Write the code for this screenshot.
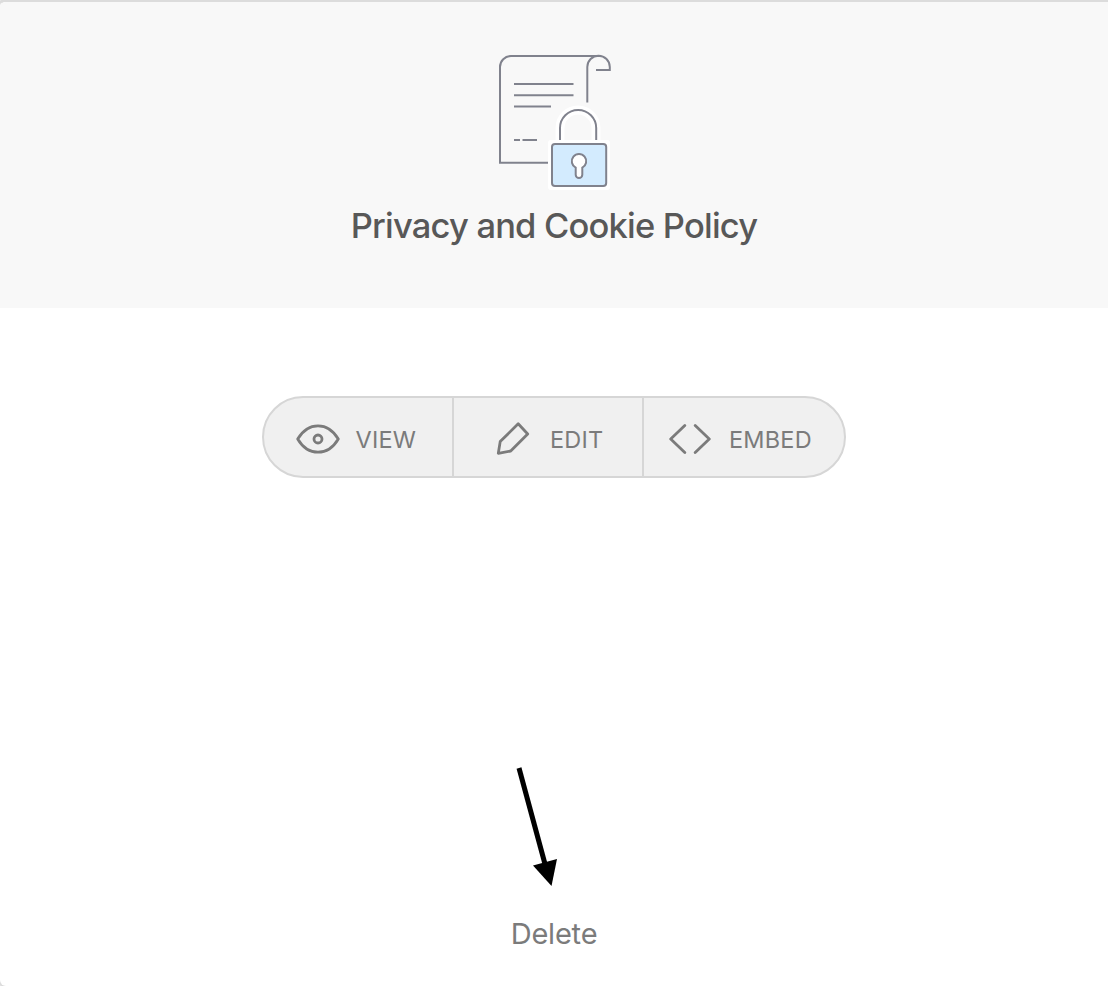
<template>
    <div class="policy-card">
        <header class="policy-header">
            <!-- Document with padlock -->
            <svg class="policy-icon" viewBox="16 12 122 140" fill="none" stroke="#80828d" stroke-width="2">
                <path d="M107.3 62.5V27a11 11 0 0 1 22.5 0v3H116M119 16H31a11 11 0 0 0-11 11v95.7h49" />
                <path d="M34 44h59.5M34 55.3h59.5M34 66.5h37M34 100h6M42.5 100H57" />
                <path class="halo" d="M80 104V88a18 18 0 0 1 36 0v16" />
                <rect class="halo-box" x="68" y="100" width="62" height="50" rx="3" />
                <path d="M80 100V88a18 18 0 0 1 36.2 0v12" />
                <rect x="72" y="104" width="54.2" height="42" rx="3" fill="#d3ebfe" />
                <path d="M95.7 127.6a7.2 7.2 0 1 1 6.6 0v7.2a3.3 3.3 0 0 1-6.6 0z" fill="#fff" />
            </svg>
            <h1 class="policy-title">Privacy and Cookie Policy</h1>
        </header>

        <main class="policy-body">
            <div class="action-group">
                <button class="action action-view" type="button">
                    <svg class="eye-icon" viewBox="0 0 44 30">
                        <path d="M1.7 15Q9.5 1.8 22 1.8T42.3 15Q34.5 28.2 22 28.2T1.7 15z" />
                        <circle cx="22" cy="15" r="4" />
                    </svg>
                    <span>VIEW</span>
                </button>
                <button class="action action-edit" type="button">
                    <svg class="pencil-icon" viewBox="0 0 34 34">
                        <path d="M22.2 1.8 31.7 12 14.7 29 2.3 31.3 4.2 19.6z" />
                    </svg>
                    <span>EDIT</span>
                </button>
                <button class="action action-embed" type="button">
                    <svg class="code-icon" viewBox="0 0 42 30">
                        <path d="M15.8 1.5 1.7 15l14.1 13.5M26.2 1.5 40.3 15 26.2 28.5" />
                    </svg>
                    <span>EMBED</span>
                </button>
            </div>

            <div class="delete-area">
                <svg class="arrow" viewBox="0 0 44 122">
                    <path d="M13 2 39 98" stroke="#000" stroke-width="5" />
                    <path d="M27 99.5 51 93 45.5 120z" />
                </svg>
                <a class="delete-link">Delete</a>
            </div>
        </main>
    </div>
</template>

<style>
body {
    background: #fff;
}
</style>

<style scoped>
.policy-card {
    display: flex;
    flex-direction: column;
    box-sizing: border-box;
    height: 986px;
    overflow: hidden;
    border-top: 2px solid #dcdcdc;
    border-radius: 6px 0 0 6px;
    background: #fff;
    box-shadow: 0 0 0 2px #dcdcdc;
    font-family: Inter, "Liberation Sans", sans-serif;
}

.policy-header {
    display: flex;
    flex-direction: column;
    align-items: center;
    box-sizing: border-box;
    height: 306px;
    padding-top: 50px;
    background: #f8f8f8;
}

.policy-icon {
    width: 122px;
    height: 140px;
    margin-left: 6px;
}

.halo {
    stroke: #fff;
    stroke-width: 9;
}

.halo-box {
    fill: #fff;
    stroke: none;
}

.policy-title {
    margin: 12px 0 0;
    color: #585858;
    font-size: 34.5px;
    font-weight: 500;
    line-height: 44px;
    letter-spacing: -0.8px;
    white-space: nowrap;
}

.policy-body {
    display: flex;
    flex: 1;
    flex-direction: column;
    align-items: center;
    justify-content: space-between;
    padding: 88px 0 33px;
}

.action-group {
    display: flex;
    box-sizing: border-box;
    width: 584px;
    height: 82px;
    overflow: hidden;
    border: 2px solid #d6d6d6;
    border-radius: 41px;
    background: #f0f0f0;
}

.action {
    display: flex;
    align-items: center;
    box-sizing: border-box;
    padding: 3px 0 0;
    border: 0;
    background: none;
    color: #7b7b7b;
    font-family: inherit;
    font-size: 23.5px;
    line-height: 30px;
    letter-spacing: 0.2px;
    cursor: pointer;
}

.action span {
    padding-top: 3px;
}

.action svg {
    flex: none;
    fill: none;
    stroke: #7b7b7b;
    stroke-width: 2.8;
    stroke-linecap: round;
    stroke-linejoin: round;
}

.action-view {
    width: 190px;
    padding-left: 32px;
    gap: 15.5px;
    border-right: 2px solid #d6d6d6;
}

.action-edit {
    width: 190px;
    padding-left: 42px;
    gap: 20px;
    border-right: 2px solid #d6d6d6;
}

.action-embed {
    flex: 1;
    padding-left: 25px;
    gap: 18px;
}

.eye-icon {
    width: 44px;
    height: 30px;
}

.pencil-icon {
    width: 34px;
    height: 34px;
}

.code-icon {
    width: 42px;
    height: 30px;
}

.delete-area {
    display: flex;
    flex-direction: column;
    align-items: center;
}

.arrow {
    width: 44px;
    height: 122px;
    margin: 0 0 27px -52px;
    overflow: visible;
}

.delete-link {
    color: #7b7b7b;
    font-size: 29px;
    line-height: 38px;
    letter-spacing: -0.2px;
    cursor: pointer;
}
</style>
